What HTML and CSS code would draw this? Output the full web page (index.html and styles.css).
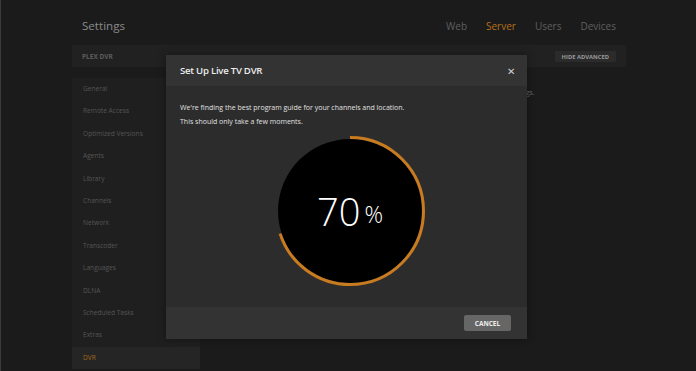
FILE: index.html
```html
<!DOCTYPE html>
<html lang="en">
<head>
    <meta charset="UTF-8">
    <meta name="viewport" content="width=device-width, initial-scale=1.0">
    <title>Settings - Plex DVR</title>
    <link rel="stylesheet" href="styles.css">
</head>
<body>
<div class="page">
    <header class="topbar">
        <h1>Settings</h1>
        <nav class="tabs">
            <a href="#">Web</a>
            <a href="#" class="active">Server</a>
            <a href="#">Users</a>
            <a href="#">Devices</a>
        </nav>
    </header>

    <div class="section-bar">
        <span class="section-title">PLEX DVR</span>
        <button class="btn-small">HIDE ADVANCED</button>
    </div>

    <div class="layout">
        <ul class="sidebar">
            <li>General</li>
            <li>Remote Access</li>
            <li>Optimized Versions</li>
            <li>Agents</li>
            <li>Library</li>
            <li>Channels</li>
            <li>Network</li>
            <li>Transcoder</li>
            <li>Languages</li>
            <li>DLNA</li>
            <li>Scheduled Tasks</li>
            <li>Extras</li>
            <li class="active">DVR</li>
        </ul>
        <div class="main">
            <p>Plex DVR lets you watch and record live TV with a tuner device. Add a device to manage your recordings.</p>
        </div>
    </div>
</div>

<div class="modal">
    <div class="modal-header">
        <h2>Set Up Live TV DVR</h2>
        <span class="close">&#x2715;</span>
    </div>
    <div class="modal-body">
        <p>We're finding the best program guide for your channels and location.<br>
        This should only take a few moments.</p>
        <div class="progress">
            <svg width="152" height="152" viewBox="0 0 152 152">
                <circle cx="76" cy="76" r="72" fill="#000"/>
                <circle cx="76" cy="76" r="73.5" fill="none" stroke="#c97b1f" stroke-width="3"
                        pathLength="100" stroke-dasharray="70 100" transform="rotate(-90 76 76)"/>
            </svg>
            <div class="progress-label"><span class="num">70</span><span class="pct">%</span></div>
        </div>
    </div>
    <div class="modal-footer">
        <button class="btn-cancel">CANCEL</button>
    </div>
</div>
</body>
</html>
```

FILE: styles.css
```css
body {
    font-family: "Open Sans", "Liberation Sans", sans-serif;
    background-color: #1b1b1b;
    margin: 0;
    height: 371px;
    overflow: hidden;
    border-left: 1px solid #3a3a3a;
    box-sizing: border-box;
}
.page {
    padding: 0 70px 0 71px;
}
.topbar {
    height: 45px;
    box-sizing: border-box;
    display: flex;
    align-items: center;
    justify-content: space-between;
    padding: 6px 10px 0 10px;
}
.topbar h1 {
    margin: 0;
    font-size: 11.6px;
    font-weight: 400;
    color: #8a8a8a;
}
.tabs {
    display: flex;
    gap: 19px;
}
.tabs a {
    font-size: 10px;
    color: #5f5f5f;
    text-decoration: none;
}
.tabs a.active {
    color: #b8701a;
}
.section-bar {
    height: 22px;
    background: #212121;
    display: flex;
    align-items: center;
    justify-content: space-between;
    padding: 0 10px;
}
.section-title {
    font-size: 6.5px;
    font-weight: 700;
    color: #5c5c5c;
}
.btn-small {
    background: #2b2b2b;
    border: none;
    color: #9a9a9a;
    font-family: inherit;
    font-size: 5.8px;
    font-weight: 700;
    padding: 2px 7px;
    height: 11px;
    border-radius: 1px;
}
.layout {
    display: flex;
    margin-top: 11px;
}
.sidebar {
    list-style: none;
    margin: 0;
    padding: 0;
    width: 128px;
    background: #1f1f1f;
}
.sidebar li {
    height: 22.4px;
    line-height: 22.4px;
    padding-left: 11px;
    font-size: 6.6px;
    color: #555;
}
.sidebar li.active {
    background: #252525;
    color: #a0651c;
}
.main {
    flex: 1;
    padding: 8px 16px;
}
.main p {
    margin: 0;
    max-width: 322px;
    font-size: 6.6px;
    color: #6a6a6a;
    line-height: 14px;
}
.modal {
    position: absolute;
    left: 166px;
    top: 55px;
    width: 361px;
    height: 284px;
    background: #2c2c2c;
    display: flex;
    flex-direction: column;
    box-shadow: 0 0 8px rgba(0, 0, 0, 0.4);
}
.modal-header {
    height: 31px;
    background: #333;
    display: flex;
    align-items: center;
    justify-content: space-between;
    padding: 0 12px 0 14px;
}
.modal-header h2 {
    margin: 0;
    font-size: 9.6px;
    font-weight: 600;
    letter-spacing: -0.25px;
    color: #ececec;
}
.close {
    font-size: 10px;
    color: #cfcfcf;
}
.modal-body {
    flex: 1;
    padding: 15px 14px 0 14px;
}
.modal-body p {
    margin: 0;
    font-size: 7px;
    line-height: 13.5px;
    color: #e0e0e0;
}
.progress {
    position: relative;
    width: 152px;
    height: 152px;
    margin: 7px 0 0 94px;
}
.progress svg {
    display: block;
}
.progress-label {
    position: absolute;
    left: 0;
    top: 0;
    width: 100%;
    height: 100%;
    display: flex;
    align-items: center;
    justify-content: center;
    color: #fff;
    font-weight: 300;
}
.progress-label .num {
    font-size: 38px;
}
.progress-label .pct {
    font-size: 23px;
    margin-left: 4px;
    margin-top: 6px;
}
.modal-footer {
    height: 32px;
    background: #333;
    display: flex;
    align-items: center;
    justify-content: flex-end;
    padding: 0 16px;
}
.btn-cancel {
    background: #666;
    border: none;
    color: #eee;
    font-family: inherit;
    font-size: 6.5px;
    font-weight: 700;
    width: 47px;
    height: 16px;
    border-radius: 2px;
}
```
